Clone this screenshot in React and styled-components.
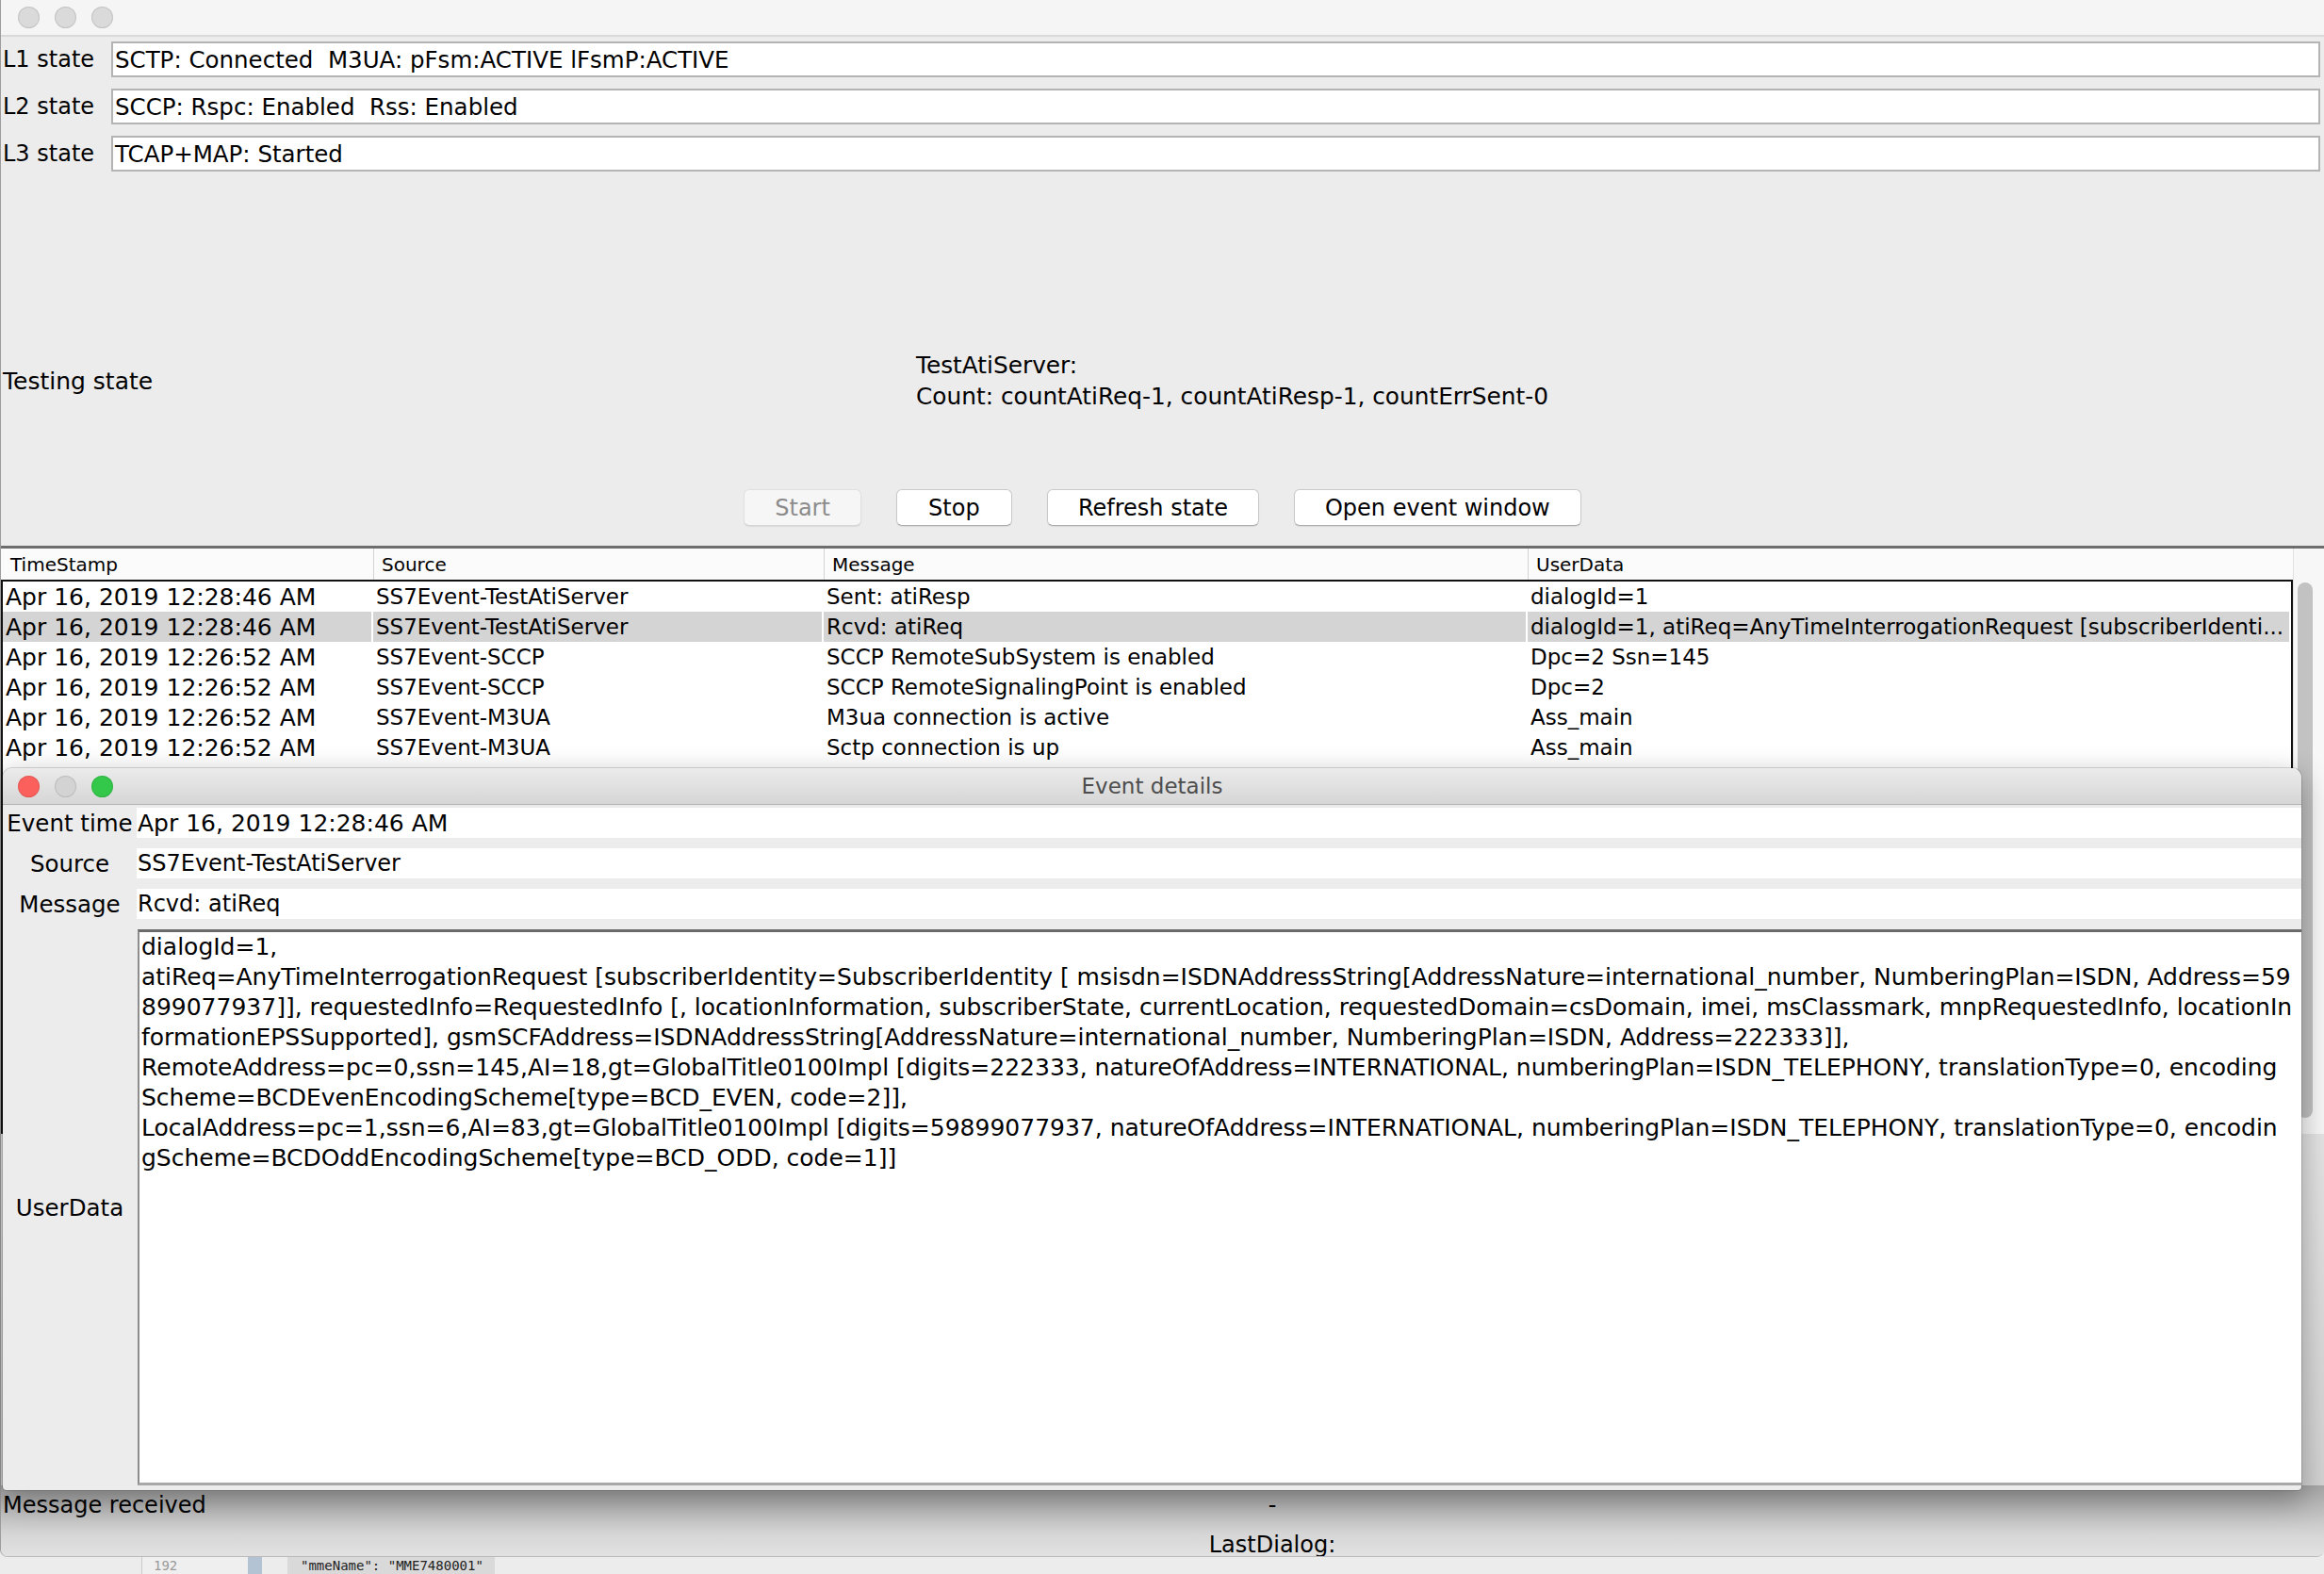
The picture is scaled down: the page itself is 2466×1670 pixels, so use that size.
import React from 'react';
import styled, { createGlobalStyle } from 'styled-components';

const GlobalStyle = createGlobalStyle`
  html, body {
    margin: 0;
    padding: 0;
  }
  body {
    background: #ececec;
    font-family: "DejaVu Sans", "Liberation Sans", sans-serif;
    color: #000;
  }
`;

const Desktop = styled.div`
  position: relative;
  width: 2466px;
  height: 1670px;
  overflow: hidden;
  display: flex;
  flex-direction: column;
  background: #ececec;
`;

const MainWindow = styled.div`
  height: 1652px;
  flex: none;
  display: flex;
  flex-direction: column;
  box-sizing: border-box;
  background: #ececec;
  border-left: 1px solid #9c9c9c;
  border-bottom: 1px solid #b9b9b9;
  border-radius: 0 0 8px 8px;
  overflow: hidden;
`;

const TitleBar = styled.div`
  height: 39px;
  flex: none;
  box-sizing: border-box;
  position: relative;
  display: flex;
  align-items: center;
  gap: 16px;
  padding-left: ${p => (p.$active ? '16px' : '18px')};
  background: ${p => (p.$active ? 'linear-gradient(#ebebeb, #d6d6d6)' : '#f5f5f5')};
  border-bottom: ${p => (p.$active ? '1px solid #b3b3b3' : '2px solid #d9d9d9')};
  border-radius: ${p => (p.$active ? '10px 10px 0 0' : '0')};
`;

const Light = styled.span`
  width: 23px;
  height: 23px;
  border-radius: 50%;
  background: ${p => p.$color};
  box-shadow: inset 0 0 0 1px rgba(0, 0, 0, 0.1);
`;

const WindowTitle = styled.span`
  position: absolute;
  left: 0;
  right: 0;
  text-align: center;
  font-size: 23px;
  color: #4d4d4d;
`;

const StateList = styled.div`
  display: flex;
  flex-direction: column;
  gap: 12px;
  padding: 5px 4px 0 2px;
`;

const StateRow = styled.div`
  display: flex;
  align-items: center;
  height: 38px;
`;

const StateLabel = styled.span`
  width: 115px;
  flex: none;
  font-size: 24px;
  white-space: nowrap;
`;

const StateBox = styled.div`
  flex: 1;
  height: 38px;
  box-sizing: border-box;
  display: flex;
  align-items: center;
  padding-left: 2px;
  background: #fff;
  border: 2px solid #b4b4b4;
  font-size: 24.5px;
  white-space: pre;
`;

const TestingRow = styled.div`
  display: flex;
  align-items: center;
  margin-top: 189px;
  height: 66px;
  padding-left: 2px;
`;

const TestingLabel = styled.span`
  width: 969px;
  flex: none;
  font-size: 25px;
`;

const TestingInfo = styled.div`
  font-size: 24.8px;
  line-height: 33px;
  white-space: nowrap;
`;

const ButtonBar = styled.div`
  display: flex;
  justify-content: center;
  gap: 37px;
  margin-top: 82px;
  height: 39px;
`;

const Button = styled.button`
  height: 39px;
  min-width: 123px;
  padding: 0 32px;
  box-sizing: border-box;
  font-family: inherit;
  font-size: 24px;
  color: ${p => (p.disabled ? '#8c8c8c' : '#000')};
  background: ${p => (p.disabled ? '#f6f6f6' : '#fff')};
  border: 1px solid ${p => (p.disabled ? '#e0e0e0' : '#c9c9c9')};
  border-bottom-color: ${p => (p.disabled ? '#d6d6d6' : '#acacac')};
  border-radius: 6px;
  box-shadow: 0 1px 1px rgba(0, 0, 0, 0.08);
`;

const TableArea = styled.div`
  margin-top: 21px;
  height: 621px;
  flex: none;
  display: flex;
  border-top: 3px solid #6d6d6d;
`;

const TableMain = styled.div`
  width: 2432px;
  flex: none;
  display: flex;
  flex-direction: column;
`;

const HeaderRow = styled.div`
  display: grid;
  grid-template-columns: 395px 478px 747px 812px;
  height: 33px;
  background: #fbfbfb;
`;

const HeaderCell = styled.div`
  display: flex;
  align-items: center;
  padding-left: ${p => (p.$first ? '10px' : '8px')};
  border-left: ${p => (p.$first ? 'none' : '1px solid #d4d4d4')};
  font-size: 20px;
  white-space: nowrap;
  overflow: hidden;
`;

const TableBody = styled.div`
  flex: 1;
  background: #fff;
  border: 2px solid #111;
  border-bottom: none;
`;

const Row = styled.div`
  display: grid;
  grid-template-columns: 393px 478px 747px 810px;
  height: 32px;
  background: ${p => (p.$selected ? '#d4d4d4' : '#fff')};
`;

const Cell = styled.div`
  display: flex;
  align-items: center;
  padding-left: 3px;
  border-right: 2px solid #fff;
  font-size: ${p => (p.$wide ? '25px' : '23px')};
  white-space: nowrap;
  overflow: hidden;
`;

const ScrollTrack = styled.div`
  flex: 1;
  display: flex;
  flex-direction: column;
  background: #f7f7f7;
  border-left: 1px solid #e2e2e2;
  padding: 36px 0 0 4px;
`;

const ScrollThumb = styled.div`
  width: 16px;
  height: 568px;
  border-radius: 8px;
  background: #c2c2c2;
`;

const Filler = styled.div`
  flex: 1;
  background: linear-gradient(to bottom, #e4e4e4, #d2d2d2);
`;

const StatusArea = styled.div`
  height: 75px;
  flex: none;
  display: grid;
  grid-template-columns: 1274px 146px;
  grid-template-rows: 42px 42px;
  padding-left: 2px;
  font-size: 24px;
  background: linear-gradient(to bottom, #a6a6a6 0%, #bdbdbd 35%, #d6d6d6 70%, #e2e2e2 100%);
`;

const StatusText = styled.span`
  display: flex;
  align-items: center;
  justify-content: ${p => (p.$center ? 'center' : 'flex-start')};
  white-space: nowrap;
`;

const EventWindow = styled.div`
  position: absolute;
  left: 3px;
  top: 815px;
  width: 2439px;
  height: 766px;
  display: flex;
  flex-direction: column;
  background: #ececec;
  border-radius: 10px 10px 4px 4px;
  box-shadow: 0 10px 30px 2px rgba(0, 0, 0, 0.3), 0 0 0 1px rgba(0, 0, 0, 0.14);
`;

const DetailGrid = styled.div`
  flex: 1;
  display: grid;
  grid-template-columns: 142px 1fr;
  grid-template-rows: 32px 32px 32px 1fr;
  row-gap: 11px;
  padding: 3px 0 5px 0;
`;

const DetailLabel = styled.div`
  display: flex;
  align-items: center;
  justify-content: center;
  font-size: 24.5px;
  white-space: nowrap;
`;

const DetailField = styled.div`
  display: flex;
  align-items: center;
  padding-left: 1px;
  background: #fff;
  font-size: ${p => (p.$wide ? '25px' : '24px')};
  white-space: nowrap;
`;

const UserDataBox = styled.div`
  margin-left: 1px;
  padding: 0 0 0 2px;
  background: #fff;
  border-top: 3px solid #6a6a6a;
  border-left: 2px solid #8d8d8d;
  border-bottom: 3px solid #a8a8a8;
  font-size: 25px;
  line-height: 32px;
  white-space: pre;
  overflow: hidden;
`;

const IdeStrip = styled.div`
  flex: 1;
  display: flex;
  align-items: stretch;
  background: #ececec;
  overflow: hidden;
  font-family: "DejaVu Sans Mono", "Liberation Mono", monospace;
  font-size: 14px;
  line-height: 18px;
`;

const Gutter = styled.div`
  margin-left: 150px;
  width: 113px;
  box-sizing: border-box;
  padding-left: 12px;
  border-left: 1px solid #c9c9c9;
  background: #efefef;
  color: #9a9a9a;
`;

const GutterMark = styled.div`
  width: 15px;
  background: #b4c3d4;
`;

const CodeLine = styled.div`
  margin-left: 27px;
  padding: 0 12px 0 14px;
  background: #d9d9d9;
  color: #222;
  white-space: pre;
`;

const stateRows = [
  ['L1 state', 'SCTP: Connected  M3UA: pFsm:ACTIVE lFsmP:ACTIVE'],
  ['L2 state', 'SCCP: Rspc: Enabled  Rss: Enabled'],
  ['L3 state', 'TCAP+MAP: Started'],
];

const events = [
  ['Apr 16, 2019 12:28:46 AM', 'SS7Event-TestAtiServer', 'Sent: atiResp', 'dialogId=1'],
  ['Apr 16, 2019 12:28:46 AM', 'SS7Event-TestAtiServer', 'Rcvd: atiReq', 'dialogId=1, atiReq=AnyTimeInterrogationRequest [subscriberIdenti...'],
  ['Apr 16, 2019 12:26:52 AM', 'SS7Event-SCCP', 'SCCP RemoteSubSystem is enabled', 'Dpc=2 Ssn=145'],
  ['Apr 16, 2019 12:26:52 AM', 'SS7Event-SCCP', 'SCCP RemoteSignalingPoint is enabled', 'Dpc=2'],
  ['Apr 16, 2019 12:26:52 AM', 'SS7Event-M3UA', 'M3ua connection is active', 'Ass_main'],
  ['Apr 16, 2019 12:26:52 AM', 'SS7Event-M3UA', 'Sctp connection is up', 'Ass_main'],
  ['Apr 16, 2019 12:26:52 AM', 'SS7Event-M3UA', 'Sctp connection is up', 'Ass_main'],
];

const userDataLines = [
  'dialogId=1,',
  'atiReq=AnyTimeInterrogationRequest [subscriberIdentity=SubscriberIdentity [ msisdn=ISDNAddressString[AddressNature=international_number, NumberingPlan=ISDN, Address=59',
  '899077937]], requestedInfo=RequestedInfo [, locationInformation, subscriberState, currentLocation, requestedDomain=csDomain, imei, msClassmark, mnpRequestedInfo, locationIn',
  'formationEPSSupported], gsmSCFAddress=ISDNAddressString[AddressNature=international_number, NumberingPlan=ISDN, Address=222333]],',
  'RemoteAddress=pc=0,ssn=145,AI=18,gt=GlobalTitle0100Impl [digits=222333, natureOfAddress=INTERNATIONAL, numberingPlan=ISDN_TELEPHONY, translationType=0, encoding',
  'Scheme=BCDEvenEncodingScheme[type=BCD_EVEN, code=2]],',
  'LocalAddress=pc=1,ssn=6,AI=83,gt=GlobalTitle0100Impl [digits=59899077937, natureOfAddress=INTERNATIONAL, numberingPlan=ISDN_TELEPHONY, translationType=0, encodin',
  'gScheme=BCDOddEncodingScheme[type=BCD_ODD, code=1]]',
];

const App = () => {
  return (
    <Desktop>
      <GlobalStyle />
      <MainWindow>
        <TitleBar>
          <Light $color="#dadada" />
          <Light $color="#dadada" />
          <Light $color="#dadada" />
        </TitleBar>

        <StateList>
          {stateRows.map(([label, value]) => (
            <StateRow key={label}>
              <StateLabel>{label}</StateLabel>
              <StateBox>{value}</StateBox>
            </StateRow>
          ))}
        </StateList>

        <TestingRow>
          <TestingLabel>Testing state</TestingLabel>
          <TestingInfo>
            TestAtiServer:
            <br />
            Count: countAtiReq-1, countAtiResp-1, countErrSent-0
          </TestingInfo>
        </TestingRow>

        <ButtonBar>
          <Button disabled>Start</Button>
          <Button>Stop</Button>
          <Button>Refresh state</Button>
          <Button>Open event window</Button>
        </ButtonBar>

        <TableArea>
          <TableMain>
            <HeaderRow>
              <HeaderCell $first>TimeStamp</HeaderCell>
              <HeaderCell>Source</HeaderCell>
              <HeaderCell>Message</HeaderCell>
              <HeaderCell>UserData</HeaderCell>
            </HeaderRow>
            <TableBody>
              {events.map((ev, i) => (
                <Row key={i} $selected={i === 1}>
                  {ev.map((v, j) => (
                    <Cell key={j} $wide={j === 0}>{v}</Cell>
                  ))}
                </Row>
              ))}
            </TableBody>
          </TableMain>
          <ScrollTrack>
            <ScrollThumb />
          </ScrollTrack>
        </TableArea>

        <Filler />

        <StatusArea>
          <StatusText>Message received</StatusText>
          <StatusText $center>-</StatusText>
          <span />
          <StatusText $center>LastDialog:</StatusText>
        </StatusArea>
      </MainWindow>

      <IdeStrip>
        <Gutter>192</Gutter>
        <GutterMark />
        <CodeLine>{'"mmeName": "MME7480001"'}</CodeLine>
      </IdeStrip>

      <EventWindow>
        <TitleBar $active>
          <Light $color="#fc605c" />
          <Light $color="#d3d3d3" />
          <Light $color="#34c84a" />
          <WindowTitle>Event details</WindowTitle>
        </TitleBar>
        <DetailGrid>
          <DetailLabel>Event time</DetailLabel>
          <DetailField $wide>Apr 16, 2019 12:28:46 AM</DetailField>
          <DetailLabel>Source</DetailLabel>
          <DetailField>SS7Event-TestAtiServer</DetailField>
          <DetailLabel>Message</DetailLabel>
          <DetailField>Rcvd: atiReq</DetailField>
          <DetailLabel>UserData</DetailLabel>
          <UserDataBox>{userDataLines.join('\n')}</UserDataBox>
        </DetailGrid>
      </EventWindow>
    </Desktop>
  );
};

export default App;
